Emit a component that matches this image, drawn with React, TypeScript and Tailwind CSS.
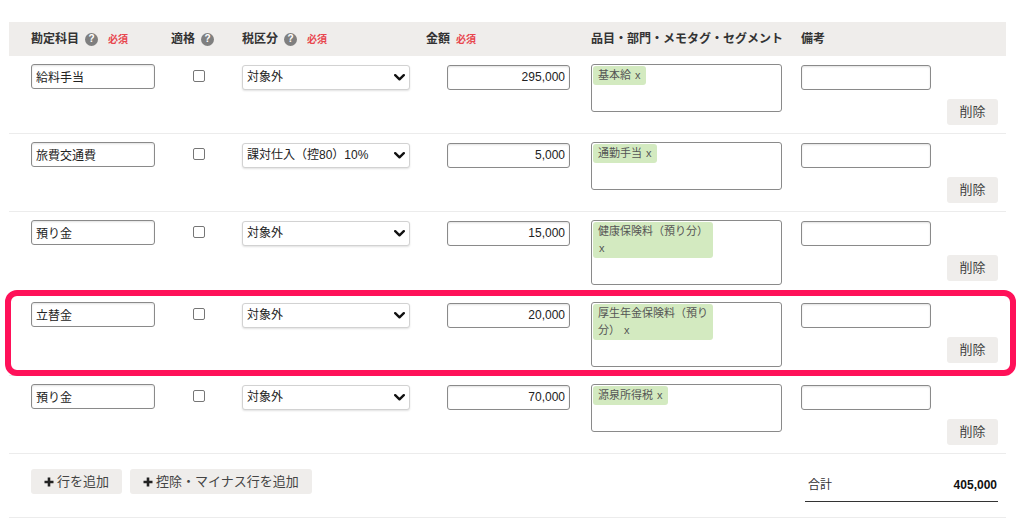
import type { ReactNode } from "react"

type Row = {
  account: string
  tax: string
  amount: string
  tag: string
  highlight?: boolean
}

const rows: Row[] = [
  { account: "給料手当", tax: "対象外", amount: "295,000", tag: "基本給" },
  { account: "旅費交通費", tax: "課対仕入（控80）10%", amount: "5,000", tag: "通勤手当" },
  { account: "預り金", tax: "対象外", amount: "15,000", tag: "健康保険料（預り分）" },
  { account: "立替金", tax: "対象外", amount: "20,000", tag: "厚生年金保険料（預り分）", highlight: true },
  { account: "預り金", tax: "対象外", amount: "70,000", tag: "源泉所得税" },
]

const grid = "grid grid-cols-[140px_71px_184px_165px_210px_146px_59px] pl-[22px]"

function Help() {
  return (
    <span className="ml-[6px] flex h-[13px] w-[13px] items-center justify-center rounded-full bg-[#7f7f7f] text-[10px] font-bold leading-none text-white">
      ?
    </span>
  )
}

function Required({ className = "ml-[10px]" }: { className?: string }) {
  return <span className={`${className} text-[10px] font-bold text-[#e8464e]`}>必須</span>
}

function HeadCell({ children }: { children: ReactNode }) {
  return <div className="flex items-center text-[12px] font-bold text-[#333]">{children}</div>
}

function Chevron() {
  return (
    <svg width="11" height="7" viewBox="0 0 11 7" className="pointer-events-none absolute right-[5px] top-[10px]">
      <path d="M1.2 1.2 L5.5 5.3 L9.8 1.2" fill="none" stroke="#111" strokeWidth="2.4" strokeLinecap="round" strokeLinejoin="round" />
    </svg>
  )
}

function Plus() {
  return (
    <svg width="10" height="10" viewBox="0 0 10 10" className="mr-[3px]">
      <path d="M5 0.5 V9.5 M0.5 5 H9.5" stroke="#222" strokeWidth="2.6" />
    </svg>
  )
}

const inputCls =
  "h-[25px] rounded-[3px] border border-[#8a8a8a] bg-white px-[4px] text-[12px] text-[#222] shadow-[inset_0_1px_2px_rgba(0,0,0,0.12)] outline-none"

function EntryRow({ row }: { row: Row }) {
  return (
    <div className={`relative border-b border-[#ececec] py-2 ${grid}`}>
      <div>
        <input readOnly defaultValue={row.account} className={`${inputCls} w-[124px]`} />
      </div>
      <div>
        <div className="ml-[22px] mt-[6px] h-[12px] w-[12px] rounded-[2px] border border-[#767676] bg-white" />
      </div>
      <div>
        <div className="relative w-[168px]">
          <select
            defaultValue={row.tax}
            className="h-[25px] w-full appearance-none rounded-[3px] border border-[#d2d2d2] bg-white pl-[4px] text-[12px] text-[#222] shadow-[0_1px_2px_rgba(0,0,0,0.12)] outline-none"
          >
            <option>{row.tax}</option>
          </select>
          <Chevron />
        </div>
      </div>
      <div>
        <input readOnly defaultValue={row.amount} className={`${inputCls} ml-[21px] w-[123px] text-right`} />
      </div>
      <div>
        <div className="flex w-[191px] flex-col items-start rounded-[3px] border border-[#8a8a8a] bg-white p-px">
          <span className="block max-w-[120px] rounded-[3px] bg-[#d3eac0] px-[5px] pb-px pt-px text-[11px] leading-[17px] text-[#555]">
            {row.tag} <span className="ml-px">x</span>
          </span>
          <div className="h-[25px]" />
        </div>
      </div>
      <div>
        <input readOnly className={`${inputCls} w-[130px]`} />
      </div>
      <div className="pt-[35px]">
        <button className="h-[26px] w-[51px] rounded-[3px] bg-[#efedeb] text-[13px] text-[#444]">削除</button>
      </div>
      {row.highlight && (
        <div className="pointer-events-none absolute -bottom-[1px] -left-[4px] -right-[10px] -top-[4px] rounded-[12px] border-[6px] border-[#ff1159]" />
      )}
    </div>
  )
}

export default function App() {
  return (
    <div className="min-h-screen bg-white pt-[22px] font-['Liberation_Sans','Noto_Sans_CJK_JP',sans-serif]">
      <div className="ml-[9px] w-[997px]">
        <div className={`h-[34px] items-center bg-[#efedeb] ${grid}`}>
          <HeadCell>
            勘定科目
            <Help />
            <Required />
          </HeadCell>
          <HeadCell>
            適格
            <Help />
          </HeadCell>
          <HeadCell>
            税区分
            <Help />
            <Required />
          </HeadCell>
          <HeadCell>
            金額
            <Required className="ml-[6px]" />
          </HeadCell>
          <HeadCell>品目・部門・メモタグ・セグメント</HeadCell>
          <HeadCell>備考</HeadCell>
          <div />
        </div>

        {rows.map((row, i) => (
          <EntryRow key={i} row={row} />
        ))}

        <div className="flex items-start justify-between border-b border-[#ececec] pb-[15px] pl-[22px] pr-[8px] pt-[15px]">
          <div className="flex gap-[8px]">
            <button className="flex h-[25px] items-center rounded-[3px] bg-[#efedeb] px-[13px] text-[13px] text-[#444]">
              <Plus />
              行を追加
            </button>
            <button className="flex h-[25px] items-center rounded-[3px] bg-[#efedeb] px-[13px] text-[13px] text-[#444]">
              <Plus />
              控除・マイナス行を追加
            </button>
          </div>
          <div className="flex h-[33px] w-[193px] items-center justify-between border-b border-[#333] pl-[3px] pr-[1px]">
            <span className="text-[12px] text-[#333]">合計</span>
            <span className="text-[12px] font-bold text-[#111]">405,000</span>
          </div>
        </div>
      </div>
    </div>
  )
}
